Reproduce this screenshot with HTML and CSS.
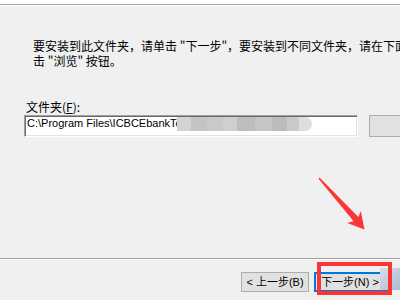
FILE: index.html
```html
<!DOCTYPE html>
<html lang="zh-CN">
<head>
<meta charset="utf-8">
<title>安装</title>
<link rel="stylesheet" href="styles.css">
</head>
<body>
<div class="page">
  <div class="top"></div>
  <main class="content">
    <p class="intro"><span class="line">要安装到此文件夹，请单击 "下一步"，要安装到不同文件夹，请在下面输入或单</span><span class="line">击 "浏览" 按钮。</span></p>
    <div class="field">
      <label class="label">文件夹(<u>F</u>):</label>
      <div class="row">
        <div class="input"><span class="path">C:\Program Files\ICBCEbankTools</span><span class="blur"></span></div>
        <button class="btn browse"></button>
      </div>
    </div>
  </main>
  <footer class="footer">
    <button class="btn nav">&lt; 上一步(B)</button>
    <button class="btn nav default">下一步(N) &gt;</button>
  </footer>
  <div class="blur-corner"></div>
  <svg class="annot" width="400" height="300" viewBox="0 0 400 300">
    <rect x="319" y="264" width="71" height="29" fill="none" stroke="#fb3535" stroke-width="4"/>
    <polygon points="318.5,178.8 319.5,177.4 358.4,217.1 360.8,211.1 364.5,229.5 347.2,222.9 353.6,221.3" fill="#fc3636"/>
  </svg>
</div>
</body>
</html>
```
FILE: styles.css
```css
html, body {
  margin: 0;
  padding: 0;
}
body {
  width: 400px;
  height: 300px;
  overflow: hidden;
  background: #f0f0f0;
  font-family: "Noto Sans CJK SC", "Microsoft YaHei", sans-serif;
  font-size: 12px;
  color: #000;
}
.page {
  position: relative;
  width: 400px;
  height: 300px;
  display: flex;
  flex-direction: column;
  overflow: hidden;
}
.top {
  flex: none;
  height: 4px;
  background: #fff;
  border-bottom: 1px solid #a0a0a0;
  box-shadow: 0 1px 0 #fff;
}
.content {
  flex: 1;
  padding-top: 33px;
}
.intro {
  margin: 0 0 0 33px;
  line-height: 15px;
  white-space: nowrap;
}
.line {
  display: block;
}
.field {
  margin-top: 31px;
  padding-left: 24px;
}
.label {
  display: block;
  padding-left: 2px;
  line-height: 15px;
}
.row {
  margin-top: 1px;
  display: flex;
  gap: 11px;
}
.input {
  flex: none;
  position: relative;
  box-sizing: border-box;
  width: 334px;
  height: 22px;
  background: #fff;
  border: 1px solid;
  border-color: #a0a0a0 #fff #fff #a0a0a0;
  box-shadow: inset 1px 1px 0 #696969, inset -1px -1px 0 #e3e3e3;
  padding: 0 0 0 2px;
  font-family: "Liberation Sans", Arial, sans-serif;
  font-size: 11px;
  line-height: 14px;
  white-space: nowrap;
  overflow: hidden;
}
.blur {
  position: absolute;
  left: 152px;
  top: 1px;
  width: 135px;
  height: 14px;
  border-radius: 0 8px 8px 0;
  background: linear-gradient(to right,
    #d3d3d3 0 14px, #c4c4c4 14px 30px, #c9c9c9 30px 46px, #cfcfcf 46px 60px,
    #bdbdbd 60px 78px, #c5c5c5 78px 95px, #bcbcbc 95px 110px, #c9c9c9 110px 122px,
    #dedede 122px);
}
.btn {
  box-sizing: border-box;
  height: 20px;
  margin: 0;
  padding: 1px 0 0;
  background: #e1e1e1;
  border: 1px solid #adadad;
  font-family: "Liberation Sans", "Noto Sans CJK SC", "Microsoft YaHei", sans-serif;
  font-size: 11px;
  line-height: 15px;
  color: #000;
  white-space: nowrap;
}
.browse {
  flex: none;
  width: 75px;
  height: 22px;
}
.footer {
  flex: none;
  box-sizing: border-box;
  height: 42px;
  border-top: 1px solid #a0a0a0;
  box-shadow: inset 0 1px 0 #fff;
  padding: 13px 0 0 241px;
  display: flex;
  align-items: flex-start;
  gap: 5px;
}
.nav {
  flex: none;
  width: 68px;
}
.default {
  width: 78px;
  padding-right: 6px;
  border-color: #0078d7;
  box-shadow: inset 0 0 0 1px #0078d7;
}
.blur-corner {
  position: absolute;
  left: 380px;
  top: 268px;
  width: 20px;
  height: 22px;
  background: linear-gradient(135deg, #d7dee9 0%, #c3cfdf 45%, #a9bcd5 100%);
}
.annot {
  position: absolute;
  left: 0;
  top: 0;
  pointer-events: none;
}
```
